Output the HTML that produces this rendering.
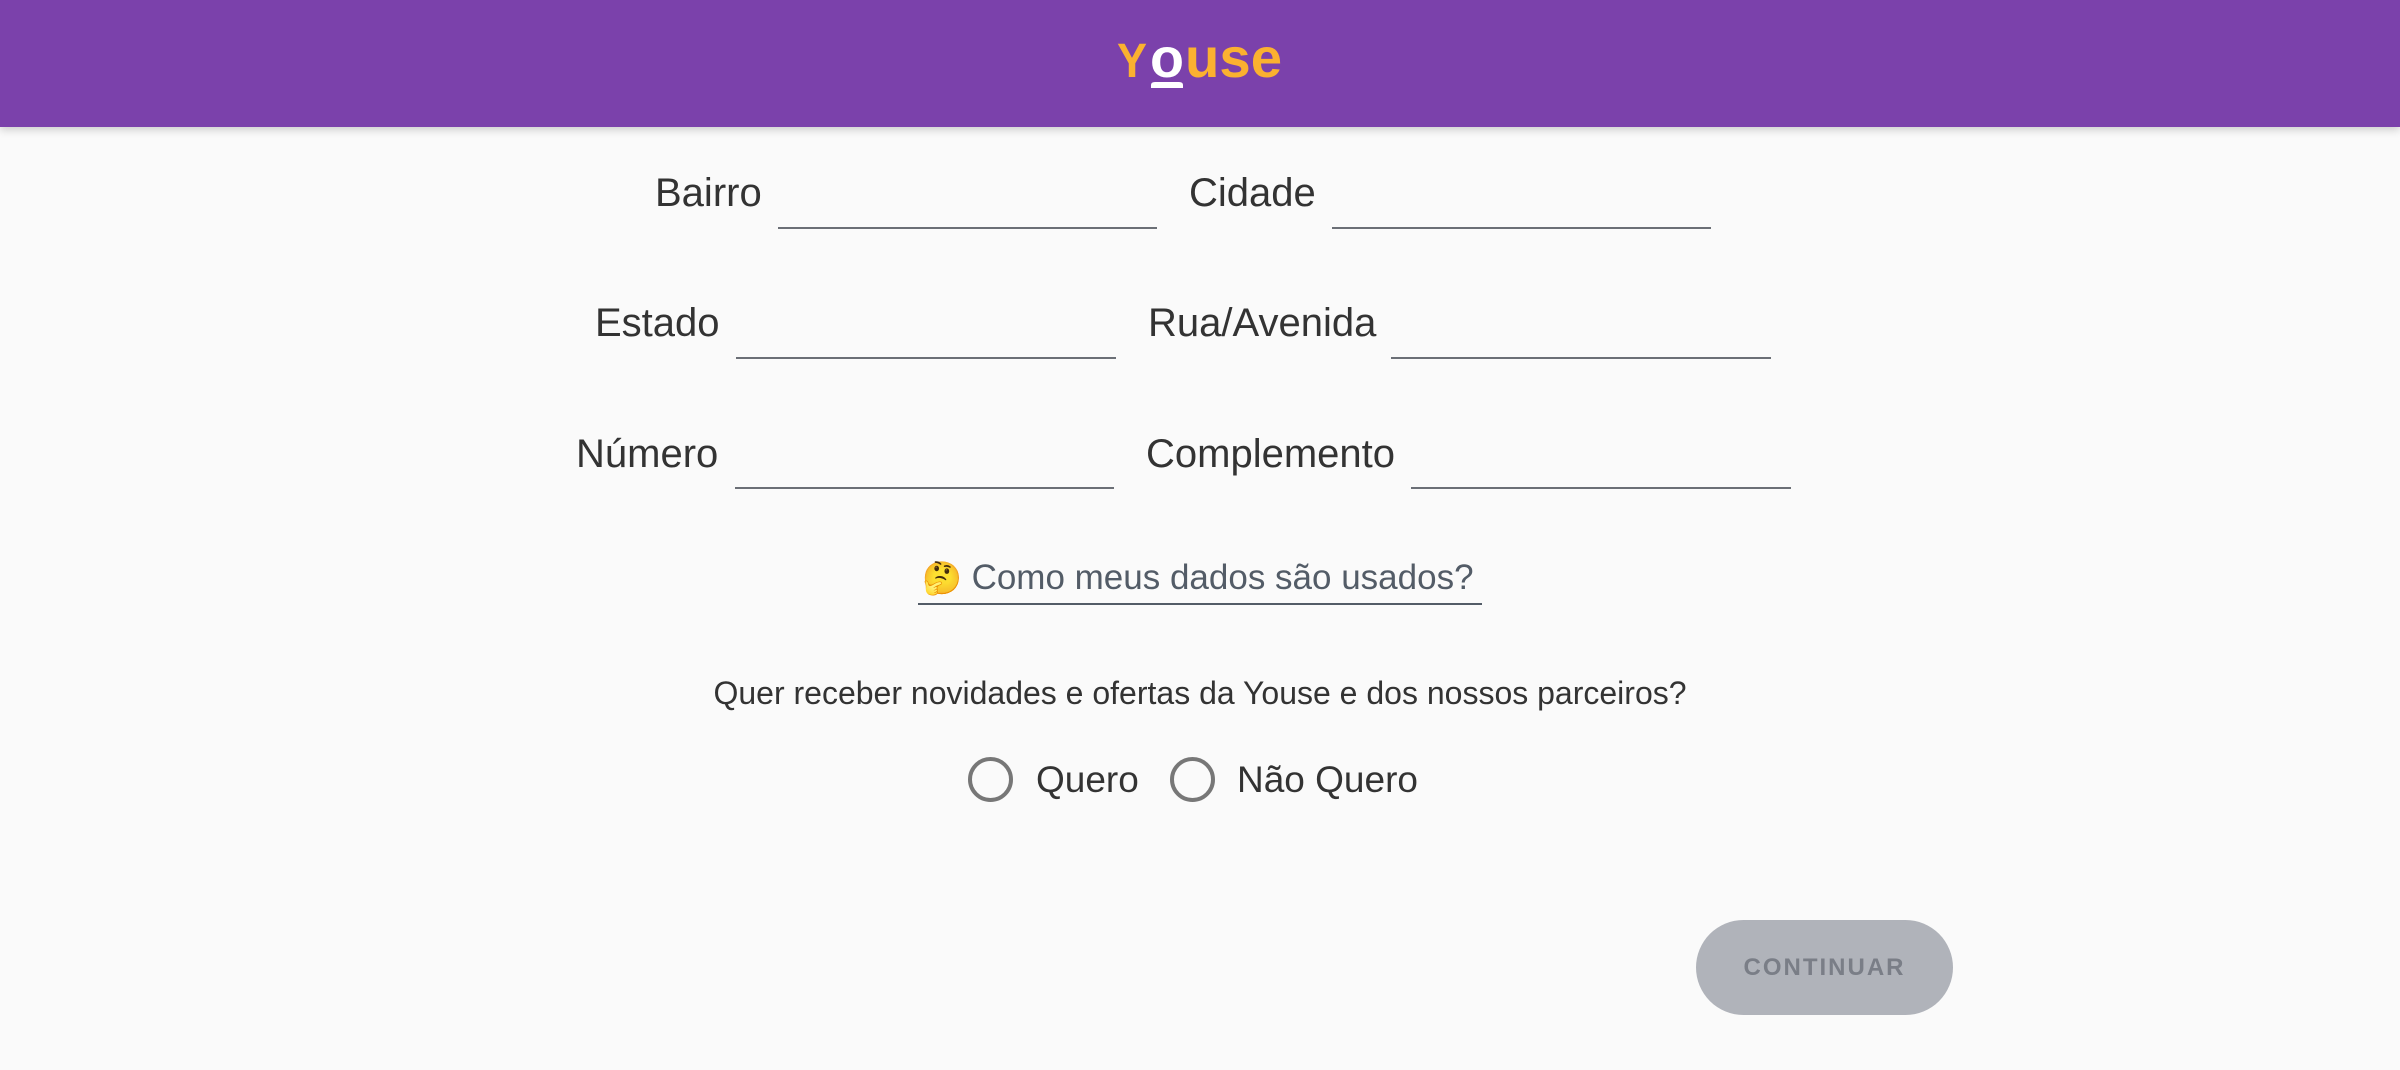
<!DOCTYPE html>
<html><head><meta charset="utf-8"><style>
*{margin:0;padding:0;box-sizing:border-box}
body{width:2400px;height:1070px;background:#fafafa;font-family:"Liberation Sans",sans-serif;color:#333;position:relative;overflow:hidden}
.hdr{position:absolute;left:0;top:0;width:2400px;height:127px;background:#7b41ab;box-shadow:0 3px 8px rgba(0,0,0,.18)}
.a{position:absolute;white-space:nowrap}
.lbl{font-size:40px;line-height:40px;color:#333}
.ln{position:absolute;height:2px;background:#6b6f76}
.rad{position:absolute;width:45px;height:45px;border:4.5px solid #777;border-radius:50%}
</style></head><body>
<div class="hdr">
  <svg class="a" style="left:0;top:0" width="2400" height="127">
    <g font-family="Liberation Sans, sans-serif" font-weight="bold">
      <text x="1117" y="77" font-size="48" fill="#fbb130" textLength="30" lengthAdjust="spacingAndGlyphs">Y</text>
      <text x="1150" y="77" font-size="56" fill="#fff" textLength="34" lengthAdjust="spacingAndGlyphs">o</text>
      <text x="1185" y="77" font-size="56" fill="#fbb130" textLength="97" lengthAdjust="spacingAndGlyphs">use</text>
    </g>
    <path d="M1151 88 V85 Q1151 82 1155 82 H1179 Q1183 82 1183 85 V88 Z" fill="#fff"/>
  </svg>
</div>

<div class="a lbl" style="left:655px;top:173px">Bairro</div>
<div class="ln" style="left:778px;top:227px;width:379px"></div>
<div class="a lbl" style="left:1189px;top:173px">Cidade</div>
<div class="ln" style="left:1332px;top:227px;width:379px"></div>

<div class="a lbl" style="left:595px;top:303px">Estado</div>
<div class="ln" style="left:736px;top:357px;width:380px"></div>
<div class="a lbl" style="left:1148px;top:303px">Rua/Avenida</div>
<div class="ln" style="left:1391px;top:357px;width:380px"></div>

<div class="a lbl" style="left:576px;top:434px">Número</div>
<div class="ln" style="left:735px;top:487px;width:379px"></div>
<div class="a lbl" style="left:1146px;top:434px">Complemento</div>
<div class="ln" style="left:1411px;top:487px;width:380px"></div>

<div class="a" style="left:922px;top:559px;font-size:35px;line-height:38px;color:#535c67"><span style="font-size:32px">🤔</span> Como meus dados são usados?</div>
<div class="ln" style="left:918px;top:603px;width:564px;background:#535c67"></div>

<div class="a" style="left:0;width:2400px;text-align:center;top:677px;font-size:32px;line-height:32px;color:#333">Quer receber novidades e ofertas da Youse e dos nossos parceiros?</div>

<div class="rad" style="left:968px;top:757px"></div>
<div class="a" style="left:1036px;top:761px;font-size:37px;line-height:38px">Quero</div>
<div class="rad" style="left:1170px;top:757px"></div>
<div class="a" style="left:1237px;top:761px;font-size:37px;line-height:38px">Não Quero</div>

<div class="a" style="left:1696px;top:920px;width:257px;height:95px;border-radius:48px;background:#b0b3ba;color:#7a7e87;font-size:24px;font-weight:bold;letter-spacing:2px;text-align:center;line-height:95px">CONTINUAR</div>
</body></html>
